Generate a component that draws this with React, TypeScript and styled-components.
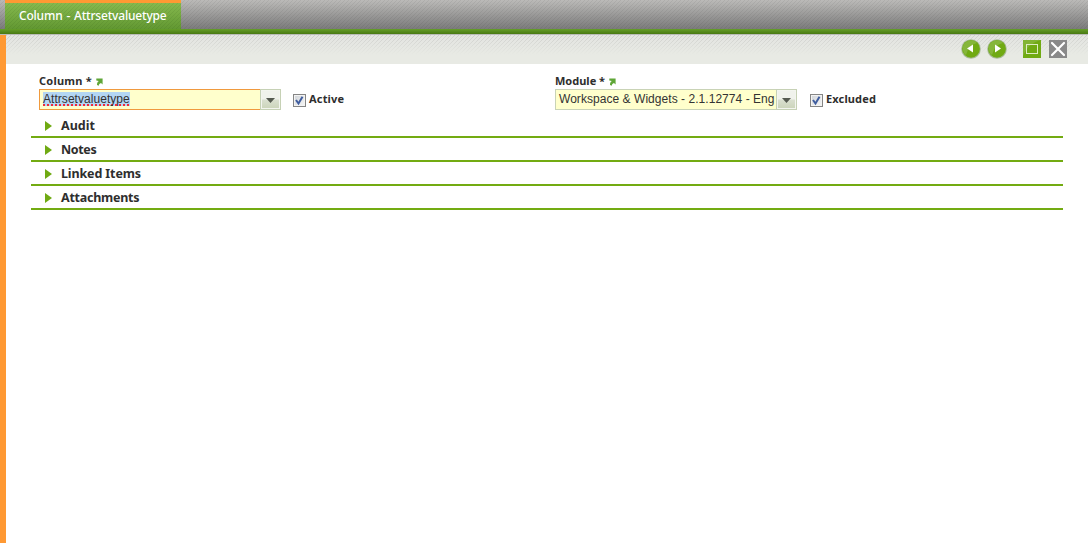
import React from "react";
import styled, { createGlobalStyle } from "styled-components";

const GlobalStyle = createGlobalStyle`
  * { box-sizing: border-box; }
  html, body { margin: 0; height: 100%; background: #fff; overflow: hidden; }
  body { font-family: "Noto Sans", "Open Sans", sans-serif; color: #2e2e2e; }
`;

const Page = styled.div`
  display: flex;
  flex-direction: column;
  height: 100vh;
`;

const TabBar = styled.header`
  height: 29px;
  flex: none;
  padding-left: 5px;
  display: flex;
  background:
    repeating-linear-gradient(135deg, rgba(0, 0, 0, 0.06) 0 0.8px, transparent 0.8px 2.83px),
    linear-gradient(#bbbab8, #7b7b7b);
`;

const Tab = styled.div`
  width: 176px;
  height: 29px;
  border-top: 3px solid #ff9933;
  padding-left: 14px;
  color: #fff;
  font-size: 12px;
  font-weight: 500;
  line-height: 25px;
  letter-spacing: -0.19px;
  word-spacing: 1px;
  white-space: nowrap;
  background:
    repeating-linear-gradient(135deg, rgba(0, 40, 0, 0.07) 0 0.8px, transparent 0.8px 2.83px),
    linear-gradient(#86b94e, #629832);
`;

const GreenRule = styled.div`
  height: 6px;
  flex: none;
  background: linear-gradient(#659e2a 0, #487912 5px, #b9bbb8 5px);
`;

const Workspace = styled.main`
  flex: 1;
  border-left: 6px solid #ff9933;
`;

const Toolbar = styled.div`
  height: 29px;
  display: flex;
  align-items: flex-start;
  justify-content: flex-end;
  padding: 4px 20px 0 0;
  background:
    linear-gradient(rgba(232, 234, 228, 0), #e8eae4 20px),
    repeating-linear-gradient(135deg, #cdcecb 0 0.8px, #e3e4e1 0.8px 2.83px);
`;

const IconButton = styled.button<{ $gap?: number }>`
  width: 20px;
  height: 20px;
  padding: 0;
  border: 0;
  background: none;
  margin-left: ${(p) => p.$gap ?? 6}px;
  svg { display: block; }
`;

const Fields = styled.div`
  display: flex;
  height: 50px;
  padding: 9px 0 0 33px;
`;

const FieldGroup = styled.div`
  width: 516px;
  flex: none;
`;

const FieldLabel = styled.div<{ $spacing: number }>`
  height: 16px;
  display: flex;
  align-items: flex-start;
  font-size: 11px;
  font-weight: 700;
  line-height: 15px;
  letter-spacing: ${(p) => p.$spacing}px;
  svg { margin: 5px 0 0 4px; }
`;

const FieldRow = styled.div`
  display: flex;
`;

const Combo = styled.div<{ $active?: boolean }>`
  display: flex;
  width: 242px;
  height: 21px;
  font: 12px/15px "Liberation Sans", Arial, sans-serif;
  letter-spacing: 0.045px;
  color: #333;
  background: #ffffcc;
  border: 1px solid ${(p) => (p.$active ? "#f09a3e" : "#c9d3b6")};
  border-right: 0;
`;

const ComboText = styled.div`
  flex: 1;
  padding: 2px 0 0 3px;
  overflow: hidden;
  white-space: nowrap;
`;

const Selected = styled.span`
  display: inline-block;
  height: 14px;
  line-height: 14px;
  background: #b3d6f3;
  text-decoration: underline dotted #ed2a3c 2px;
  text-underline-offset: 1px;
  text-decoration-skip-ink: none;
`;

const DropButton = styled.div`
  width: 21px;
  height: 21px;
  margin-top: -1px;
  padding-top: 2px;
  flex: none;
  display: flex;
  align-items: center;
  justify-content: center;
  border: 1px solid #c6d1b5;
  box-shadow: inset 0 0 0 1px #f3f5ef;
  background: linear-gradient(#f0f2ec 0 9px, #d9dfcf 10px, #cbd4b9);
`;

const CheckLabel = styled.div<{ $spacing: number; $gap: number }>`
  display: flex;
  margin-left: ${(p) => p.$gap}px;
  font-size: 11px;
  font-weight: 700;
  line-height: 19px;
  letter-spacing: ${(p) => p.$spacing}px;
`;

const CheckBox = styled.span`
  width: 13px;
  height: 13px;
  margin: 5px 3px 0 0;
  border: 1px solid #858585;
  background: linear-gradient(135deg, #cfd3d8, #f7f7f7);
  box-shadow: inset 0 0 0 1px #f3f3f3;
  svg { display: block; }
`;

const Sections = styled.div`
  margin: 0 25px;
`;

const SectionRow = styled.div<{ $spacing: number }>`
  height: 24px;
  display: flex;
  align-items: flex-start;
  padding-left: 14px;
  border-bottom: 2px solid #73ab12;
  font-size: 12.5px;
  font-weight: 700;
  line-height: 24px;
  letter-spacing: ${(p) => p.$spacing}px;
  svg { margin: 7px 9px 0 0; }
`;

const LinkArrow = () => (
  <svg width="7" height="8" viewBox="0 0 7 8">
    <path d="M0.3 0.6H6.6V6.4L5 5C3.6 5.4 2.9 6.3 2.8 7.8L1 7C0.9 5.2 1.6 3.9 2.8 3.1L0.3 2.4Z" fill="#5fa637" />
  </svg>
);

const DropArrow = () => (
  <svg width="9" height="5" viewBox="0 0 9 5">
    <path d="M0 0H9L4.5 5Z" fill="#555a50" />
  </svg>
);

const RoundArrow = ({ back }: { back?: boolean }) => (
  <svg width="20" height="20" viewBox="0 0 20 20">
    <circle cx="10" cy="10" r="9.8" fill="#a9bb98" />
    <circle cx="10" cy="9.8" r="8.9" fill="#70aa13" />
    <path d="M1.6 10A8.4 8.4 0 0 1 16 4Q8 5 5 16Q2 14 1.6 10Z" fill="#91bd50" opacity="0.65" />
    <path d={back ? "M6 9.5L12 5.5V13.5Z" : "M14 9.5L8 5.5V13.5Z"} fill="#fff" />
  </svg>
);

const MaximizeIcon = () => (
  <svg width="20" height="20" viewBox="0 0 20 20">
    <rect x="1" y="1" width="18" height="18" fill="#70aa13" />
    <path d="M1 1H19Q6 4 1 17Z" fill="#94be54" opacity="0.5" />
    <rect x="4.5" y="5.5" width="11" height="9" fill="none" stroke="#dcebc3" />
  </svg>
);

const CloseIcon = () => (
  <svg width="20" height="20" viewBox="0 0 20 20">
    <rect x="1" y="1" width="18" height="18" fill="#898989" />
    <path d="M4 4L16 16M16 4L4 16" stroke="#fff" strokeWidth="2.2" strokeLinecap="round" />
  </svg>
);

const CheckMark = () => (
  <CheckBox>
    <svg width="11" height="11" viewBox="0 0 11 11">
      <path d="M2 5L4.5 8.5L8.5 1.8" fill="none" stroke="#3f5d9f" strokeWidth="2" />
    </svg>
  </CheckBox>
);

const sections = [
  { title: "Audit", spacing: 0 },
  { title: "Notes", spacing: -0.35 },
  { title: "Linked Items", spacing: -0.12 },
  { title: "Attachments", spacing: -0.25 },
];

export default function App() {
  return (
    <Page>
      <GlobalStyle />
      <TabBar>
        <Tab>Column - Attrsetvaluetype</Tab>
      </TabBar>
      <GreenRule />
      <Workspace>
        <Toolbar>
          <IconButton aria-label="Previous"><RoundArrow back /></IconButton>
          <IconButton aria-label="Next"><RoundArrow /></IconButton>
          <IconButton aria-label="Maximize" $gap={15}><MaximizeIcon /></IconButton>
          <IconButton aria-label="Close"><CloseIcon /></IconButton>
        </Toolbar>
        <Fields>
          <FieldGroup>
            <FieldLabel $spacing={0.25}>Column *<LinkArrow /></FieldLabel>
            <FieldRow>
              <Combo $active>
                <ComboText><Selected>Attrsetvaluetype</Selected></ComboText>
                <DropButton><DropArrow /></DropButton>
              </Combo>
              <CheckLabel $gap={12} $spacing={0.18}><CheckMark />Active</CheckLabel>
            </FieldRow>
          </FieldGroup>
          <FieldGroup>
            <FieldLabel $spacing={0}>Module *<LinkArrow /></FieldLabel>
            <FieldRow>
              <Combo>
                <ComboText>Workspace &amp; Widgets - 2.1.12774 - Eng</ComboText>
                <DropButton><DropArrow /></DropButton>
              </Combo>
              <CheckLabel $gap={13} $spacing={0.14}><CheckMark />Excluded</CheckLabel>
            </FieldRow>
          </FieldGroup>
        </Fields>
        <Sections>
          {sections.map((s) => (
            <SectionRow key={s.title} $spacing={s.spacing}>
              <svg width="7" height="10" viewBox="0 0 7 10"><path d="M0 0L7 5L0 10Z" fill="#70aa13" /></svg>
              {s.title}
            </SectionRow>
          ))}
        </Sections>
      </Workspace>
    </Page>
  );
}
